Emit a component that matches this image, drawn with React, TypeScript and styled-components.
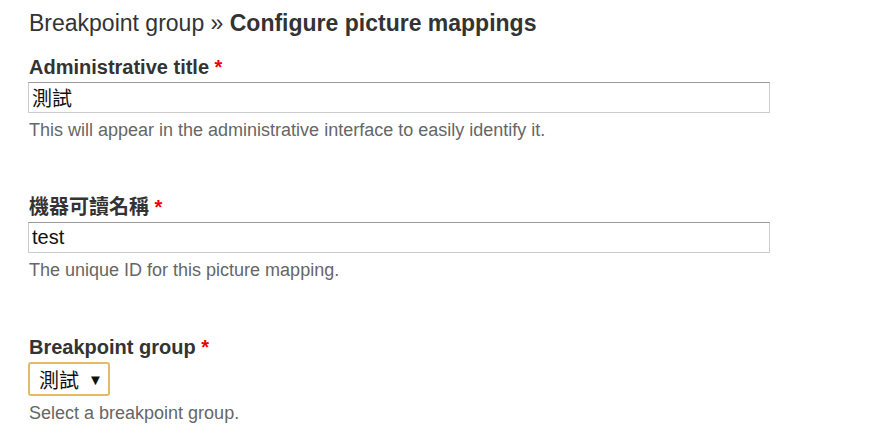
import styled, { createGlobalStyle } from "styled-components";

const GlobalStyle = createGlobalStyle`
  html, body {
    margin: 0;
    padding: 0;
    background: #fff;
  }
  body {
    font-family: "Liberation Sans", Arial, "Noto Sans CJK TC", sans-serif;
    color: #333;
  }
`;

const Page = styled.div`
  padding: 8px 29px 0 29px;
  width: 742px;
`;

const Title = styled.h1`
  margin: 0 0 17px 0;
  font-size: 23px;
  font-weight: normal;
  line-height: 30px;
  color: #333;

  strong {
    font-weight: bold;
  }
`;

const Field = styled.div`
  display: flex;
  flex-direction: column;
  align-items: flex-start;
  margin-bottom: 54px;

  &:last-child {
    margin-bottom: 0;
  }
`;

const Label = styled.label`
  font-size: 20px;
  font-weight: bold;
  line-height: 24px;
  margin-bottom: 3px;
`;

const Required = styled.span`
  color: #e00;
`;

const TextInput = styled.input`
  box-sizing: border-box;
  width: 742px;
  height: 31px;
  margin: 0 0 0 -1px;
  padding: 0 3px;
  border: 1px solid #ccc;
  border-top-color: #999;
  font-family: "Liberation Sans", Arial, "Noto Sans CJK TC", sans-serif;
  font-size: 20px;
  color: #111;
  outline: none;
`;

const SelectBox = styled.div`
  box-sizing: border-box;
  display: flex;
  align-items: center;
  gap: 9px;
  height: 34px;
  margin-left: -1px;
  padding: 0 5px 0 9px;
  border: 2px solid #e2ba68;
  border-radius: 3px;
  font-family: "Liberation Sans", Arial, "Noto Sans CJK TC", sans-serif;
  font-size: 20px;
  color: #111;
`;

const Arrow = styled.span`
  font-size: 15px;
`;

const Description = styled.div`
  margin-top: 6px;
  font-size: 18px;
  line-height: 22px;
  color: #666;
`;

export default function App() {
  return (
    <>
      <GlobalStyle />
      <Page>
        <Title>
          Breakpoint group » <strong>Configure picture mappings</strong>
        </Title>
        <Field>
          <Label>
            Administrative title <Required>*</Required>
          </Label>
          <TextInput defaultValue="測試" />
          <Description>
            This will appear in the administrative interface to easily identify it.
          </Description>
        </Field>
        <Field>
          <Label>
            機器可讀名稱 <Required>*</Required>
          </Label>
          <TextInput defaultValue="test" />
          <Description>The unique ID for this picture mapping.</Description>
        </Field>
        <Field>
          <Label>
            Breakpoint group <Required>*</Required>
          </Label>
          <SelectBox>
            <span>測試</span>
            <Arrow>▼</Arrow>
          </SelectBox>
          <Description>Select a breakpoint group.</Description>
        </Field>
      </Page>
    </>
  );
}
